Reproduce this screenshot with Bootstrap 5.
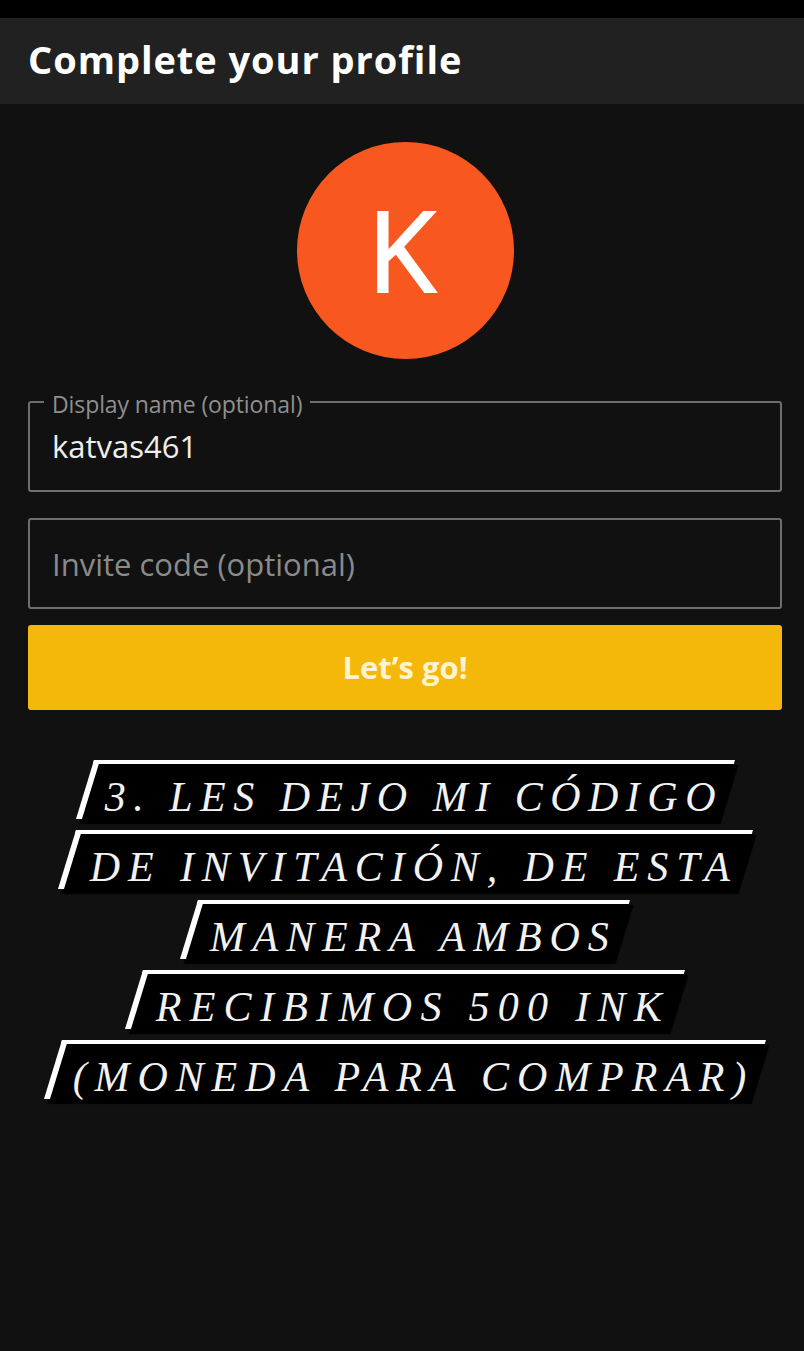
<!DOCTYPE html>
<html lang="en">
<head>
    <meta charset="UTF-8">
    <meta name="viewport" content="width=device-width, initial-scale=1.0">
    <title>Complete your profile</title>
    <link href="https://cdn.jsdelivr.net/npm/bootstrap@5.3.0/dist/css/bootstrap.min.css" rel="stylesheet">
    <style>
        body { background: #111; height: 1351px; overflow: hidden; font-family: "Open Sans", sans-serif; }
        .status-strip { height: 18px; background: #000; }
        .top-bar { height: 86px; background: #212121; padding-left: 28px; padding-bottom: 3px; }
        .top-bar h1 { font-size: 38px; font-weight: 700; color: #fff; margin: 0; letter-spacing: .95px; }
        .avatar-wrap { padding: 38px 0 42px 6px; }
        .avatar { width: 217px; height: 217px; background: #f8581f; color: #fff; font-size: 112px; font-weight: 400; -webkit-text-stroke: 2px #fff; line-height: 1; padding: 0 7px 4px 0; }
        .form-area { padding: 0 22px 0 28px; }
        .field { height: 91px; border: 2px solid #6e6e6e; border-radius: 3px; padding: 0 22px; color: #eee; font-size: 31px; }
        .field-label { background: #111; color: #8f8f8f; font-size: 23px; line-height: 26px; padding: 0 8px; top: -12px; left: 14px; letter-spacing: -.1px; }
        .field-named { padding-top: 23px; line-height: 40px; margin-bottom: 26px; }
        .field-empty { color: #8a8a8a; padding-top: 2px; }
        .go-btn { height: 85px; background: #f4b80b; border: 0; border-radius: 3px; color: #fff3d0; font-size: 31px; font-weight: 700; margin-top: 16px; }
        .go-btn:hover { background: #f4b80b; color: #fff3d0; }
        .caption-stack { margin-top: 50px; padding-left: 6px; gap: 11px; }
        .cap-line { height: 59px; background: #000; border-top: 4px solid #fff; border-left: 6px solid #fff; box-shadow: 5px 5px 1px #000; transform: skewX(-17deg); }
        .cap-text { transform: skewX(17deg); padding-left: 15px; font-family: "Liberation Serif", serif; font-style: italic; color: #f2f2f2; font-size: 42px; line-height: 66px; letter-spacing: 7.9px; white-space: nowrap; }
        .w-1 { width: 641px; }
        .w-1 .cap-text { letter-spacing: 7.5px; }
        .w-2 { width: 677px; }
        .w-3 { width: 432px; }
        .w-4 { width: 542px; }
        .w-4 .cap-text { letter-spacing: 8.3px; }
        .w-5 { width: 704px; }
    </style>
</head>
<body>
    <div class="status-strip"></div>
    <div class="top-bar d-flex align-items-center">
        <h1>Complete your profile</h1>
    </div>
    <div class="avatar-wrap d-flex justify-content-center">
        <div class="avatar rounded-circle d-flex justify-content-center align-items-center">K</div>
    </div>
    <div class="form-area">
        <div class="field field-named position-relative">
            <span class="field-label position-absolute">Display name (optional)</span>
            katvas461
        </div>
        <div class="field field-empty d-flex align-items-center">Invite code (optional)</div>
        <button type="button" class="btn go-btn w-100 d-flex justify-content-center align-items-center">Let’s go!</button>
    </div>
    <div class="caption-stack d-flex flex-column align-items-center">
        <div class="cap-line w-1 d-flex justify-content-center align-items-start"><div class="cap-text">3. LES DEJO MI CÓDIGO</div></div>
        <div class="cap-line w-2 d-flex justify-content-center align-items-start"><div class="cap-text">DE INVITACIÓN, DE ESTA</div></div>
        <div class="cap-line w-3 d-flex justify-content-center align-items-start"><div class="cap-text">MANERA AMBOS</div></div>
        <div class="cap-line w-4 d-flex justify-content-center align-items-start"><div class="cap-text">RECIBIMOS 500 INK</div></div>
        <div class="cap-line w-5 d-flex justify-content-center align-items-start"><div class="cap-text">(MONEDA PARA COMPRAR)</div></div>
    </div>
    <script src="https://cdn.jsdelivr.net/npm/bootstrap@5.3.0/dist/js/bootstrap.bundle.min.js"></script>
</body>
</html>
